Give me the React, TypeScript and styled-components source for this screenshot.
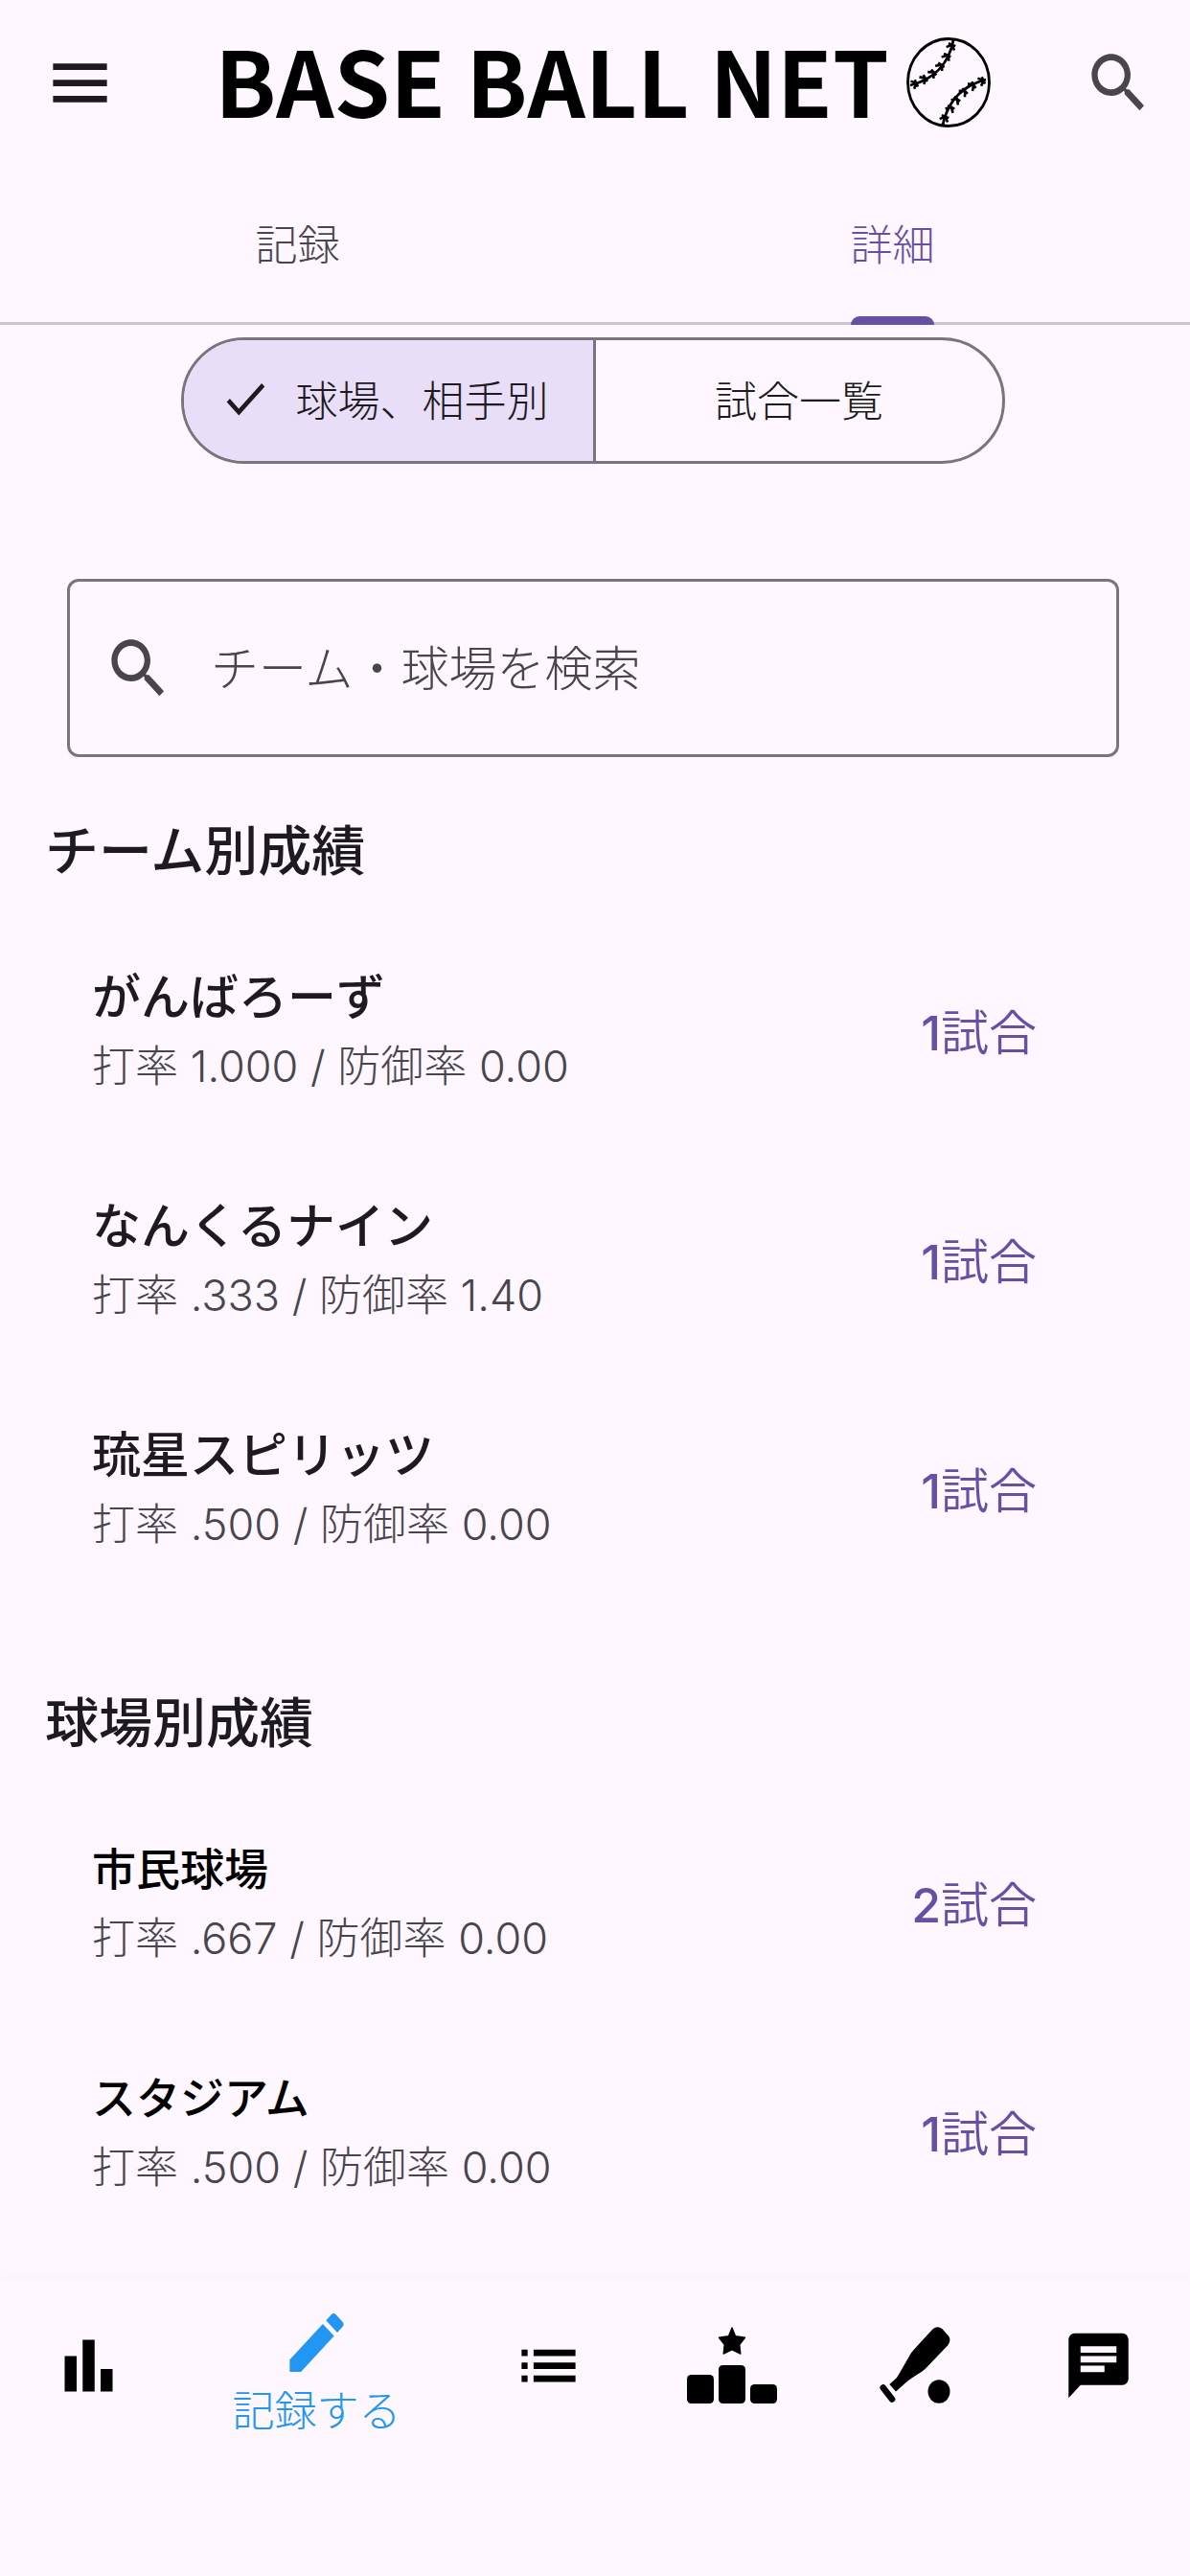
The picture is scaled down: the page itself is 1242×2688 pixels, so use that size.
import React, { useState } from "react";
import styled, { createGlobalStyle } from "styled-components";

const color = {
  surface: "#fef7ff",
  ink: "#1d1b20",
  muted: "#49454f",
  primary: "#6750a4",
  outline: "#79747e",
  divider: "#cac4d0",
  selected: "#e8def8",
  active: "#2196f3",
};

const jp = `"Noto Sans CJK JP", "Noto Sans", sans-serif`;
const mixed = `Inter, "Noto Sans CJK JP", sans-serif`;

const GlobalStyle = createGlobalStyle`
  *, *::before, *::after { box-sizing: border-box; }
  body {
    margin: 0;
    background: ${color.surface};
    color: ${color.ink};
    font-family: ${jp};
  }
  button, input { font: inherit; color: inherit; }
  h1, h2, h3, p, ul { margin: 0; padding: 0; }
`;

const Page = styled.div`
  display: flex;
  flex-direction: column;
  min-height: 100vh;
`;

const Header = styled.header`
  display: flex;
  align-items: center;
  height: 172px;
`;

const IconButton = styled.button<{ $tone: string; $width: number }>`
  display: flex;
  justify-content: center;
  align-items: center;
  flex: none;
  width: ${(p) => p.$width}px;
  height: 120px;
  padding: 0;
  border: 0;
  background: none;
  color: ${(p) => p.$tone};
`;

const Brand = styled.div`
  flex: 1;
  display: flex;
  justify-content: center;
  align-items: center;
  gap: 18px;
  color: #000;
`;

const BrandName = styled.h1`
  padding-bottom: 8px;
  font-size: 94px;
  line-height: 120px;
  font-weight: 700;
  white-space: nowrap;
`;

const Tabs = styled.div`
  display: grid;
  grid-template-columns: 1fr 1fr;
  height: 167px;
  border-bottom: 3px solid ${color.divider};
`;

const Tab = styled.button<{ $active: boolean }>`
  position: relative;
  display: flex;
  justify-content: center;
  align-items: center;
  padding: 0 0 2px;
  border: 0;
  background: none;
  font-size: 44px;
  font-weight: 300;
  color: ${(p) => (p.$active ? color.primary : color.muted)};

  &::after {
    content: "";
    display: ${(p) => (p.$active ? "block" : "none")};
    position: absolute;
    bottom: -3px;
    width: 87px;
    height: 9px;
    border-radius: 9px 9px 0 0;
    background: ${color.primary};
  }
`;

const Main = styled.main`
  flex: 1;
`;

const Controls = styled.div`
  display: flex;
  flex-direction: column;
  gap: 120px;
  padding: 13px 74px 0 70px;
`;

const Segments = styled.div`
  display: grid;
  grid-template-columns: 1fr 1fr;
  width: 860px;
  max-width: 100%;
  height: 132px;
  margin: 0 auto;
  border: 3px solid ${color.outline};
  border-radius: 66px;
  overflow: hidden;
`;

const Segment = styled.button<{ $active: boolean }>`
  display: flex;
  justify-content: center;
  align-items: center;
  gap: 26px;
  padding: 0 ${(p) => (p.$active ? 10 : 0)}px 4px 0;
  border: 0;
  background: ${(p) => (p.$active ? color.selected : "none")};
  font-size: 44px;
  font-weight: 300;

  & + & {
    border-left: 3px solid ${color.outline};
  }
`;

const SearchBox = styled.label`
  display: flex;
  align-items: center;
  gap: 38px;
  height: 186px;
  padding: 0 34px;
  border: 3px solid ${color.outline};
  border-radius: 12px;
  color: ${color.muted};
`;

const SearchInput = styled.input`
  flex: 1;
  min-width: 0;
  padding: 0 0 6px;
  border: 0;
  outline: 0;
  background: none;
  font-size: 50px;
  line-height: 72px;
  font-weight: 300;

  &::placeholder {
    color: ${color.muted};
    opacity: 1;
  }
`;

const Section = styled.section`
  & + & {
    padding-top: 25px;
  }
`;

const SectionTitle = styled.h2`
  margin: 59px 47px 39px;
  font-size: 56px;
  line-height: 70px;
  font-weight: 500;
`;

const List = styled.ul`
  list-style: none;
`;

const Row = styled.li`
  display: flex;
  justify-content: space-between;
  align-items: center;
  height: 239px;
  padding: 0 160px 0 96px;
`;

const RowText = styled.div`
  display: grid;
  gap: 4px;
  padding-bottom: 6px;
`;

const Name = styled.h3<{ $compact: boolean }>`
  font-size: ${(p) => (p.$compact ? 46 : 51)}px;
  line-height: 72px;
  font-weight: 500;
  color: ${(p) => (p.$compact ? "#000" : color.ink)};
`;

const Stats = styled.p`
  font-family: ${mixed};
  font-size: 45px;
  line-height: 72px;
  font-weight: 300;
  color: ${color.muted};
`;

const Count = styled.span`
  font-family: ${mixed};
  font-size: 50px;
  line-height: 72px;
  font-weight: 350;
  color: ${color.primary};
`;

const CountNumber = styled.span`
  font-weight: 500;
`;

const Nav = styled.nav`
  display: grid;
  grid-template-columns: 184fr 292fr repeat(4, 191fr);
  height: 309px;
  padding-bottom: 131px;
  box-shadow: 0 -3px 12px rgba(29, 27, 32, 0.02);
`;

const NavItem = styled.button<{ $active: boolean }>`
  display: flex;
  flex-direction: column;
  justify-content: center;
  align-items: center;
  padding: ${(p) => (p.$active ? 8 : 0)}px 0 0;
  border: 0;
  background: none;
  font-size: 44px;
  line-height: 56px;
  font-weight: 300;
  color: ${(p) => (p.$active ? color.active : "#000")};
`;

type GlyphProps = { d: string; width?: number; height?: number };

const Glyph = ({ d, width = 75, height = 81 }: GlyphProps) => (
  <svg width={width} height={height} viewBox="0 0 24 24" preserveAspectRatio="none" fill="currentColor" aria-hidden="true">
    <path d={d} />
  </svg>
);

const glyphs = {
  menu: "M3 18h18v-2H3v2zm0-5h18v-2H3v2zm0-7v2h18V6H3z",
  search:
    "M15.5 14h-.79l-.28-.27C15.41 12.59 16 11.11 16 9.5 16 5.91 13.09 3 9.5 3S3 5.91 3 9.5 5.91 16 9.5 16c1.61 0 3.09-.59 4.23-1.57l.27.28v.79l5 4.99L20.49 19l-4.99-5zm-6 0C7.01 14 5 11.99 5 9.5S7.01 5 9.5 5 14 7.01 14 9.5 11.99 14 9.5 14z",
  check: "M9 16.17L4.83 12l-1.42 1.41L9 19 21 7l-1.41-1.41z",
  bars: "M4 9h4v11H4zM16 13h4v7h-4zM10 4h4v16h-4z",
  pencil:
    "M3 17.25V21h3.75L17.81 9.94l-3.75-3.75L3 17.25zM20.71 7.04c.39-.39.39-1.02 0-1.41l-2.34-2.34c-.39-.39-1.02-.39-1.41 0l-1.83 1.83 3.75 3.75 1.83-1.83z",
  list: "M3 13h2v-2H3v2zm0 4h2v-2H3v2zm0-8h2V7H3v2zm4 4h14v-2H7v2zm0 4h14v-2H7v2zM7 7v2h14V7H7z",
  chat: "M20 2H4c-1.1 0-1.99.9-1.99 2L2 22l4-4h14c1.1 0 2-.9 2-2V4c0-1.1-.9-2-2-2zM6 9h12v2H6V9zm8 5H6v-2h8v2zm4-6H6V6h12v2z",
};

/* Each stitch is a small barbed mark: position on the seam and its angle. */
const stitches = [
  [47, 9, -68],
  [42, 20, -63],
  [35.5, 30, -54],
  [27.5, 37.5, -42],
  [18.5, 43.5, -33],
  [9, 48.5, -24],
  [79, 45.5, -24],
  [69, 50.5, -33],
  [60, 57, -44],
  [52, 65.5, -54],
  [46, 74, -62],
  [40, 84, -68],
];

const Baseball = () => (
  <svg width="88" height="94" viewBox="0 0 88 94" fill="none" stroke="currentColor" aria-hidden="true">
    <ellipse cx="44" cy="47" rx="42.5" ry="45.5" strokeWidth="2.8" />
    <path d="M49 3C45 24 32 43 4 50M83 44C60 50 44 64 38 91" strokeWidth="2.8" />
    {stitches.map(([x, y, angle]) => (
      <path key={`${x}-${y}`} d="M-3 -4.5L1.5 0L-3 4.5M1.5 -4V4" strokeWidth="2.6" transform={`translate(${x} ${y}) rotate(${angle})`} />
    ))}
  </svg>
);

const Podium = () => (
  <svg width="94" height="80" viewBox="0 0 94 80" fill="currentColor" aria-hidden="true">
    <path
      d="M47 1L50.5 9.8L60.5 11.3L54.8 18.5L55.8 28L47 23.8L38.2 28L39.2 18.5L33.5 11.3L43.5 9.8Z"
      stroke="currentColor"
      strokeWidth="1.4"
      strokeLinejoin="round"
    />
    <rect x="0" y="50" width="28" height="30" rx="4.5" />
    <rect x="33" y="40" width="28" height="40" rx="4.5" />
    <rect x="66" y="60" width="28" height="20" rx="4.5" />
  </svg>
);

const Bat = () => (
  <svg width="74" height="80" viewBox="0 0 74 80" fill="currentColor" aria-hidden="true">
    <path d="M55.4 2.5Q60.5 -2 65.5 2.2L72 9.5Q75 14 71.5 19L49 42.5Q47 44.8 43 47.5Q33 53.5 27.7 58L17 67.5L10.3 60L17.8 53.3Q20 50 32.9 27.3Q34.5 25 55.4 2.5Z" />
    <path d="M3.7 63.5L13 75.5" stroke="currentColor" strokeWidth="6.6" strokeLinecap="round" />
    <ellipse cx="62" cy="67.5" rx="11.5" ry="12.2" />
  </svg>
);

const sections = [
  {
    title: "チーム別成績",
    compact: false,
    rows: [
      { name: "がんばろーず", avg: "1.000", era: "0.00", games: 1 },
      { name: "なんくるナイン", avg: ".333", era: "1.40", games: 1 },
      { name: "琉星スピリッツ", avg: ".500", era: "0.00", games: 1 },
    ],
  },
  {
    title: "球場別成績",
    compact: true,
    rows: [
      { name: "市民球場", avg: ".667", era: "0.00", games: 2 },
      { name: "スタジアム", avg: ".500", era: "0.00", games: 1 },
    ],
  },
];

const navItems = [
  { id: "stats", name: "成績", icon: <Glyph d={glyphs.bars} /> },
  { id: "record", name: "記録する", icon: <Glyph d={glyphs.pencil} /> },
  { id: "list", name: "一覧", icon: <Glyph d={glyphs.list} /> },
  { id: "ranking", name: "ランキング", icon: <Podium /> },
  { id: "play", name: "試合", icon: <Bat /> },
  { id: "chat", name: "チャット", icon: <Glyph d={glyphs.chat} /> },
];

export default function App() {
  const [tab, setTab] = useState("詳細");
  const [view, setView] = useState("球場、相手別");
  const [nav, setNav] = useState("record");
  const [query, setQuery] = useState("");

  return (
    <Page lang="ja">
      <GlobalStyle />
      <Header>
        <IconButton $tone={color.ink} $width={166} aria-label="メニュー">
          <Glyph d={glyphs.menu} />
        </IconButton>
        <Brand>
          <BrandName>BASE BALL NET</BrandName>
          <Baseball />
        </Brand>
        <IconButton $tone={color.muted} $width={150} aria-label="検索">
          <Glyph d={glyphs.search} />
        </IconButton>
      </Header>

      <Tabs role="tablist">
        {["記録", "詳細"].map((name) => (
          <Tab key={name} role="tab" aria-selected={tab === name} $active={tab === name} onClick={() => setTab(name)}>
            {name}
          </Tab>
        ))}
      </Tabs>

      <Main>
        <Controls>
          <Segments>
            {["球場、相手別", "試合一覧"].map((name) => (
              <Segment key={name} aria-pressed={view === name} $active={view === name} onClick={() => setView(name)}>
                {view === name && <Glyph d={glyphs.check} width={54} height={60} />}
                {name}
              </Segment>
            ))}
          </Segments>

          <SearchBox>
            <Glyph d={glyphs.search} />
            <SearchInput
              type="text"
              aria-label="チーム・球場を検索"
              placeholder="チーム・球場を検索"
              value={query}
              onChange={(e) => setQuery(e.target.value)}
            />
          </SearchBox>
        </Controls>

        {sections.map((section) => (
          <Section key={section.title}>
            <SectionTitle>{section.title}</SectionTitle>
            <List>
              {section.rows
                .filter((row) => row.name.includes(query))
                .map((row) => (
                  <Row key={row.name}>
                    <RowText>
                      <Name $compact={section.compact}>{row.name}</Name>
                      <Stats>
                        打率 {row.avg} / 防御率 {row.era}
                      </Stats>
                    </RowText>
                    <Count>
                      <CountNumber>{row.games}</CountNumber>試合
                    </Count>
                  </Row>
                ))}
            </List>
          </Section>
        ))}
      </Main>

      <Nav>
        {navItems.map((item) => (
          <NavItem key={item.id} aria-label={item.name} $active={nav === item.id} onClick={() => setNav(item.id)}>
            {item.icon}
            {nav === item.id && <span>{item.name}</span>}
          </NavItem>
        ))}
      </Nav>
    </Page>
  );
}
